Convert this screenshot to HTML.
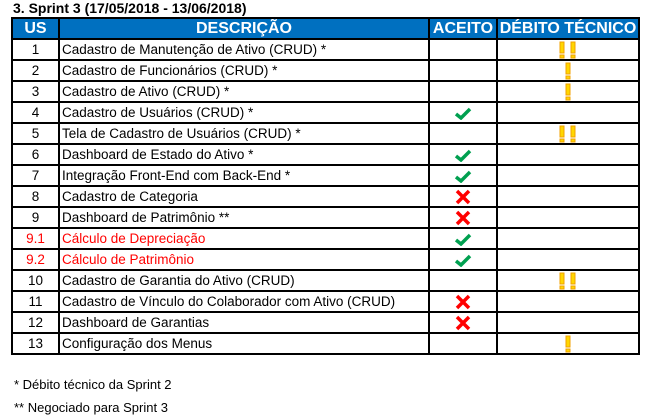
<!DOCTYPE html>
<html><head><meta charset="utf-8"><style>
body{margin:0;width:645px;height:420px;background:#fff;font-family:"Liberation Sans",sans-serif;position:relative;overflow:hidden}
.t{position:absolute;left:13px;top:0px;font-weight:bold;font-size:14px;color:#000}
table{position:absolute;left:11px;top:17px;border-collapse:collapse;table-layout:fixed}
td,th{border:2px solid #000;height:19px;padding:0;font-size:13.5px;white-space:nowrap;overflow:hidden}
th{background:#0070C0;color:#fff;font-size:16px;font-weight:bold;text-align:center;line-height:18px}
td.c{text-align:center}
td.d{padding-left:2px}
.r{color:#f00}
.f{position:absolute;left:14px;font-size:13px}
svg{display:block;margin:0 auto}
</style></head><body>
<div class="t">3. Sprint 3 (17/05/2018 - 13/06/2018)</div>
<table>
<colgroup><col style="width:47px"><col style="width:370px"><col style="width:68px"><col style="width:142px"></colgroup>
<tr><th>US</th><th>DESCRIÇÃO</th><th>ACEITO</th><th>DÉBITO TÉCNICO</th></tr>
<tr><td class="c">1</td><td class="d">Cadastro de Manutenção de Ativo (CRUD) *</td><td></td><td class="c"><svg width="22" height="18"><rect x="3" y="1" width="4" height="11" fill="#FFD700" stroke="#F0A000"/><rect x="3" y="14" width="4" height="3" fill="#FFD700" stroke="#F0A000"/><rect x="14" y="1" width="4" height="11" fill="#FFD700" stroke="#F0A000"/><rect x="14" y="14" width="4" height="3" fill="#FFD700" stroke="#F0A000"/></svg></td></tr>
<tr><td class="c">2</td><td class="d">Cadastro de Funcionários (CRUD) *</td><td></td><td class="c"><svg width="8" height="18"><rect x="2" y="1" width="4" height="11" fill="#FFD700" stroke="#F0A000"/><rect x="2" y="14" width="4" height="3" fill="#FFD700" stroke="#F0A000"/></svg></td></tr>
<tr><td class="c">3</td><td class="d">Cadastro de Ativo (CRUD) *</td><td></td><td class="c"><svg width="8" height="18"><rect x="2" y="1" width="4" height="11" fill="#FFD700" stroke="#F0A000"/><rect x="2" y="14" width="4" height="3" fill="#FFD700" stroke="#F0A000"/></svg></td></tr>
<tr><td class="c">4</td><td class="d">Cadastro de Usuários (CRUD) *</td><td class="c"><svg width="18" height="14"><path d="M2 8 L7 12 L16 3" stroke="#00A050" stroke-width="3.5" fill="none"/></svg></td><td></td></tr>
<tr><td class="c">5</td><td class="d">Tela de Cadastro de Usuários (CRUD) *</td><td></td><td class="c"><svg width="22" height="18"><rect x="3" y="1" width="4" height="11" fill="#FFD700" stroke="#F0A000"/><rect x="3" y="14" width="4" height="3" fill="#FFD700" stroke="#F0A000"/><rect x="14" y="1" width="4" height="11" fill="#FFD700" stroke="#F0A000"/><rect x="14" y="14" width="4" height="3" fill="#FFD700" stroke="#F0A000"/></svg></td></tr>
<tr><td class="c">6</td><td class="d">Dashboard de Estado do Ativo *</td><td class="c"><svg width="18" height="14"><path d="M2 8 L7 12 L16 3" stroke="#00A050" stroke-width="3.5" fill="none"/></svg></td><td></td></tr>
<tr><td class="c">7</td><td class="d">Integração Front-End com Back-End *</td><td class="c"><svg width="18" height="14"><path d="M2 8 L7 12 L16 3" stroke="#00A050" stroke-width="3.5" fill="none"/></svg></td><td></td></tr>
<tr><td class="c">8</td><td class="d">Cadastro de Categoria</td><td class="c"><svg width="16" height="16"><path d="M2 2 L14 14 M14 2 L2 14" stroke="#f00" stroke-width="3.5"/></svg></td><td></td></tr>
<tr><td class="c">9</td><td class="d">Dashboard de Patrimônio **</td><td class="c"><svg width="16" height="16"><path d="M2 2 L14 14 M14 2 L2 14" stroke="#f00" stroke-width="3.5"/></svg></td><td></td></tr>
<tr><td class="c r">9.1</td><td class="d r">Cálculo de Depreciação</td><td class="c"><svg width="18" height="14"><path d="M2 8 L7 12 L16 3" stroke="#00A050" stroke-width="3.5" fill="none"/></svg></td><td></td></tr>
<tr><td class="c r">9.2</td><td class="d r">Cálculo de Patrimônio</td><td class="c"><svg width="18" height="14"><path d="M2 8 L7 12 L16 3" stroke="#00A050" stroke-width="3.5" fill="none"/></svg></td><td></td></tr>
<tr><td class="c">10</td><td class="d">Cadastro de Garantia do Ativo (CRUD)</td><td></td><td class="c"><svg width="22" height="18"><rect x="3" y="1" width="4" height="11" fill="#FFD700" stroke="#F0A000"/><rect x="3" y="14" width="4" height="3" fill="#FFD700" stroke="#F0A000"/><rect x="14" y="1" width="4" height="11" fill="#FFD700" stroke="#F0A000"/><rect x="14" y="14" width="4" height="3" fill="#FFD700" stroke="#F0A000"/></svg></td></tr>
<tr><td class="c">11</td><td class="d">Cadastro de Vínculo do Colaborador com Ativo (CRUD)</td><td class="c"><svg width="16" height="16"><path d="M2 2 L14 14 M14 2 L2 14" stroke="#f00" stroke-width="3.5"/></svg></td><td></td></tr>
<tr><td class="c">12</td><td class="d">Dashboard de Garantias</td><td class="c"><svg width="16" height="16"><path d="M2 2 L14 14 M14 2 L2 14" stroke="#f00" stroke-width="3.5"/></svg></td><td></td></tr>
<tr><td class="c">13</td><td class="d">Configuração dos Menus</td><td></td><td class="c"><svg width="8" height="18"><rect x="2" y="1" width="4" height="11" fill="#FFD700" stroke="#F0A000"/><rect x="2" y="14" width="4" height="3" fill="#FFD700" stroke="#F0A000"/></svg></td></tr>
</table>
<div class="f" style="top:377px">* Débito técnico da Sprint 2</div>
<div class="f" style="top:400px">** Negociado para Sprint 3</div>
</body></html>
